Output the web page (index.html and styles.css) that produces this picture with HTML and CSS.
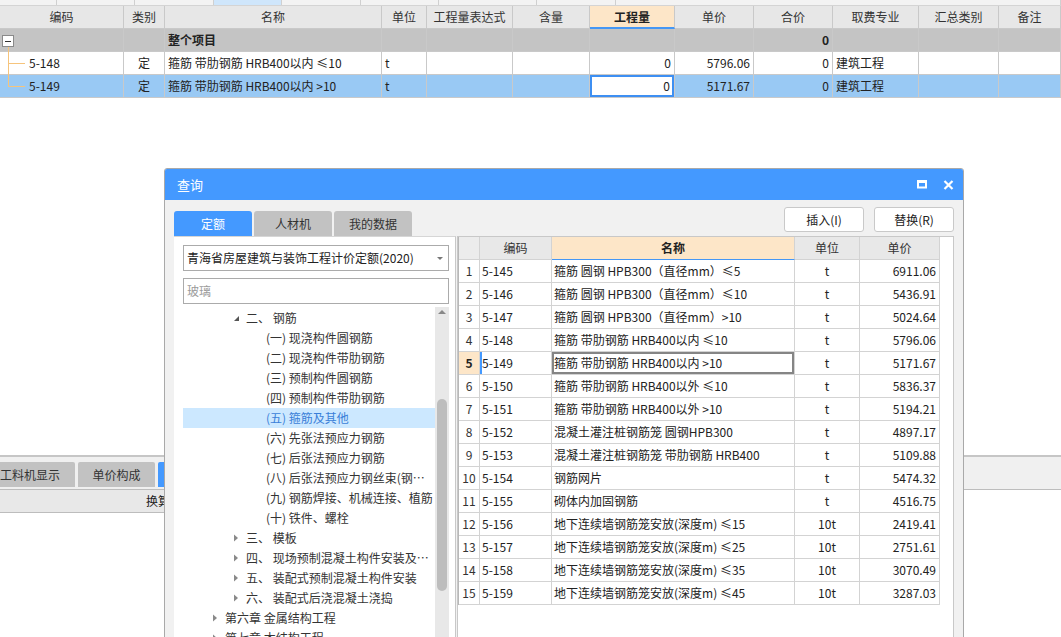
FILE: index.html
```html
<!DOCTYPE html>
<html lang="zh-CN">
<head>
<meta charset="utf-8">
<title>查询</title>
<link rel="stylesheet" href="styles.css">
</head>
<body>
<div class="app">
  <div class="main">
    <div class="strip">
      <span></span><span></span><span></span><span class="strip-hi"></span><span></span><span></span><span></span><span></span><span></span>
    </div>
    <div class="trow thead">
      <div>编码</div><div>类别</div><div>名称</div><div>单位</div><div>工程量表达式</div><div>含量</div><div class="hl">工程量</div><div>单价</div><div>合价</div><div>取费专业</div><div>汇总类别</div><div>备注</div>
    </div>
    <div class="trow total">
      <div></div><div></div><div class="b">整个项目</div><div></div><div></div><div></div><div></div><div></div><div class="num b">0</div><div></div><div></div><div></div>
    </div>
    <div class="trow">
      <div class="code">5-148</div><div class="c">定</div><div>箍筋 带肋钢筋 HRB400以内 ≤10</div><div>t</div><div></div><div></div><div class="num">0</div><div class="num">5796.06</div><div class="num">0</div><div>建筑工程</div><div></div><div></div>
    </div>
    <div class="trow sel">
      <div class="code">5-149</div><div class="c">定</div><div>箍筋 带肋钢筋 HRB400以内 &gt;10</div><div>t</div><div></div><div></div><div class="num edit">0</div><div class="num">5171.67</div><div class="num">0</div><div>建筑工程</div><div></div><div></div>
    </div>
    <svg class="treelines" width="30" height="100" viewBox="0 0 30 100">
      <path d="M8.5 47 V86.5 M8.5 63.5 H25 M8.5 86.5 H25" stroke="#f6c47c" stroke-width="1" fill="none"/>
      <rect x="2.5" y="35.5" width="11" height="11" fill="#fff" stroke="#8a8a8a"/>
      <path d="M5 41.5 H11" stroke="#333" stroke-width="1"/>
    </svg>
  </div>

  <div class="bottom">
    <div class="btabs">
      <span class="btab first">工料机显示</span>
      <span class="btab">单价构成</span>
      <span class="btab blue">标准换算</span>
    </div>
    <div class="bsub"><span>换算</span></div>
  </div>
</div>

<div class="dlg">
  <div class="dlg-title">
    <span>查询</span>
    <span class="dlg-icons">
      <svg width="10" height="9" viewBox="0 0 10 9"><rect x="1" y="1.5" width="8" height="6" fill="none" stroke="#fff" stroke-width="2"/><rect x="0" y="0" width="10" height="3" fill="#fff"/></svg>
      <svg width="11" height="10" viewBox="0 0 11 10"><path d="M1.5 1 L9.5 9 M9.5 1 L1.5 9" stroke="#fff" stroke-width="2.2"/></svg>
    </span>
  </div>
  <div class="dlg-toolbar">
    <div class="tabs">
      <span class="tab active">定额</span>
      <span class="tab">人材机</span>
      <span class="tab">我的数据</span>
    </div>
    <div class="btns">
      <span class="btn">插入(I)</span>
      <span class="btn">替换(R)</span>
    </div>
  </div>
  <div class="panes">
    <div class="left">
      <div class="select"><span>青海省房屋建筑与装饰工程计价定额(2020)</span><i class="caret"></i></div>
      <div class="search">玻璃</div>
      <div class="tree-wrap">
        <div class="tree">
          <div class="node l2"><svg class="ar" width="13" height="20" viewBox="0 0 13 20"><polygon points="1,13 6,13 6,8" fill="#555"/></svg>二、 钢筋</div>
          <div class="node l3"><i class="sp"></i>(一) 现浇构件圆钢筋</div>
          <div class="node l3"><i class="sp"></i>(二) 现浇构件带肋钢筋</div>
          <div class="node l3"><i class="sp"></i>(三) 预制构件圆钢筋</div>
          <div class="node l3"><i class="sp"></i>(四) 预制构件带肋钢筋</div>
          <div class="node l3 on"><i class="sp"></i>(五) 箍筋及其他</div>
          <div class="node l3"><i class="sp"></i>(六) 先张法预应力钢筋</div>
          <div class="node l3"><i class="sp"></i>(七) 后张法预应力钢筋</div>
          <div class="node l3"><i class="sp"></i>(八) 后张法预应力钢丝束(钢绞线)</div>
          <div class="node l3"><i class="sp"></i>(九) 钢筋焊接、机械连接、植筋</div>
          <div class="node l3"><i class="sp"></i>(十) 铁件、螺栓</div>
          <div class="node l2"><svg class="ar" width="13" height="20" viewBox="0 0 13 20"><polygon points="1,6.5 5,10 1,13.5" fill="#8a8a8a"/></svg>三、 模板</div>
          <div class="node l2"><svg class="ar" width="13" height="20" viewBox="0 0 13 20"><polygon points="1,6.5 5,10 1,13.5" fill="#8a8a8a"/></svg>四、 现场预制混凝土构件安装及运输</div>
          <div class="node l2"><svg class="ar" width="13" height="20" viewBox="0 0 13 20"><polygon points="1,6.5 5,10 1,13.5" fill="#8a8a8a"/></svg>五、 装配式预制混凝土构件安装</div>
          <div class="node l2"><svg class="ar" width="13" height="20" viewBox="0 0 13 20"><polygon points="1,6.5 5,10 1,13.5" fill="#8a8a8a"/></svg>六、 装配式后浇混凝土浇捣</div>
          <div class="node l1"><svg class="ar" width="13" height="20" viewBox="0 0 13 20"><polygon points="1,6.5 5,10 1,13.5" fill="#8a8a8a"/></svg>第六章 金属结构工程</div>
          <div class="node l1"><svg class="ar" width="13" height="20" viewBox="0 0 13 20"><polygon points="1,6.5 5,10 1,13.5" fill="#8a8a8a"/></svg>第七章 木结构工程</div>
        </div>
        <div class="vscroll"><i class="up"></i><i class="thumb"></i></div>
      </div>
    </div>
    <div class="right">
      <div class="rt">
        <div class="rrow rhead"><div></div><div>编码</div><div class="hl">名称</div><div>单位</div><div>单价</div></div>
        <div class="rrow"><div>1</div><div>5-145</div><div>箍筋 圆钢 HPB300（直径mm）≤5</div><div class="c">t</div><div class="num">6911.06</div></div>
        <div class="rrow"><div>2</div><div>5-146</div><div>箍筋 圆钢 HPB300（直径mm）≤10</div><div class="c">t</div><div class="num">5436.91</div></div>
        <div class="rrow"><div>3</div><div>5-147</div><div>箍筋 圆钢 HPB300（直径mm）&gt;10</div><div class="c">t</div><div class="num">5024.64</div></div>
        <div class="rrow"><div>4</div><div>5-148</div><div>箍筋 带肋钢筋 HRB400以内 ≤10</div><div class="c">t</div><div class="num">5796.06</div></div>
        <div class="rrow cur"><div>5</div><div>5-149</div><div>箍筋 带肋钢筋 HRB400以内 &gt;10</div><div class="c">t</div><div class="num">5171.67</div></div>
        <div class="rrow"><div>6</div><div>5-150</div><div>箍筋 带肋钢筋 HRB400以外 ≤10</div><div class="c">t</div><div class="num">5836.37</div></div>
        <div class="rrow"><div>7</div><div>5-151</div><div>箍筋 带肋钢筋 HRB400以外 &gt;10</div><div class="c">t</div><div class="num">5194.21</div></div>
        <div class="rrow"><div>8</div><div>5-152</div><div>混凝土灌注桩钢筋笼 圆钢HPB300</div><div class="c">t</div><div class="num">4897.17</div></div>
        <div class="rrow"><div>9</div><div>5-153</div><div>混凝土灌注桩钢筋笼 带肋钢筋 HRB400</div><div class="c">t</div><div class="num">5109.88</div></div>
        <div class="rrow"><div>10</div><div>5-154</div><div>钢筋网片</div><div class="c">t</div><div class="num">5474.32</div></div>
        <div class="rrow"><div>11</div><div>5-155</div><div>砌体内加固钢筋</div><div class="c">t</div><div class="num">4516.75</div></div>
        <div class="rrow"><div>12</div><div>5-156</div><div>地下连续墙钢筋笼安放(深度m) ≤15</div><div class="c">10t</div><div class="num">2419.41</div></div>
        <div class="rrow"><div>13</div><div>5-157</div><div>地下连续墙钢筋笼安放(深度m) ≤25</div><div class="c">10t</div><div class="num">2751.61</div></div>
        <div class="rrow"><div>14</div><div>5-158</div><div>地下连续墙钢筋笼安放(深度m) ≤35</div><div class="c">10t</div><div class="num">3070.49</div></div>
        <div class="rrow"><div>15</div><div>5-159</div><div>地下连续墙钢筋笼安放(深度m) ≤45</div><div class="c">10t</div><div class="num">3287.03</div></div>
      </div>
    </div>
  </div>
</div>
</body>
</html>
```

FILE: styles.css
```css
* { box-sizing: border-box; margin: 0; padding: 0; }
html, body { width: 1061px; height: 637px; overflow: hidden; }
body {
  font-family: "Noto Sans CJK SC", "Microsoft YaHei", sans-serif;
  font-size: 12px;
  color: #222;
  background: #fff;
  position: relative;
}
.app { display: flex; flex-direction: column; height: 637px; }

/* ---------- top grid ---------- */
.main { height: 455px; position: relative; }
.strip {
  display: grid;
  grid-template-columns: 57px 78px 79px 68px 79px 78px 98px 79px 1fr;
  height: 6px;
  background: #f3f3f3;
  border-bottom: 1px solid #d4d4d4;
}
.strip span { border-right: 1px solid #d0d0d0; }
.strip .strip-hi { background: #cfe6fb; }

.trow {
  display: grid;
  grid-template-columns: 124px 41px 217px 45px 86px 77px 85px 79px 79px 86px 80px 1fr;
  height: 23px;
}
.trow > div {
  border-right: 1px solid #c9c9c9;
  border-bottom: 1px solid #c9c9c9;
  line-height: 22px;
  padding: 0 3px;
  white-space: nowrap;
  overflow: hidden;
}
.thead { height: 23px; }
.thead > div { background: #e7e7e7; text-align: center; color: #333; }
.thead > div.hl {
  background: #fde6c8;
  font-weight: bold;
  color: #222;
  border-bottom: 2px solid #4597f5;
  line-height: 21px;
}
.total > div { background: #c4c4c4; }
.sel > div { background: #99c9f4; }
.trow .b { font-weight: bold; }
.trow .num { text-align: right; }
.trow .c { text-align: center; }
.trow .code { padding-left: 29px; }
.sel > div.edit {
  background: #fff;
  box-shadow: inset 0 0 0 2px #3d8ff2;
  padding-right: 4px;
}
.treelines { position: absolute; left: 0; top: 0; }

/* ---------- bottom panel ---------- */
.bottom { flex: 1; border-top: 2px solid #c6c6c6; }
.btabs {
  height: 33px;
  background: #f0f0f0;
  border-bottom: 1px solid #bdbdbd;
  display: flex;
  align-items: flex-end;
  gap: 3px;
  padding-bottom: 2px;
  overflow: hidden;
}
.btab {
  width: 77px;
  height: 25px;
  flex: none;
  background: #c2c2c2;
  color: #333;
  text-align: center;
  line-height: 25px;
  border-radius: 2px 2px 0 0;
}
.btab.first { width: 88px; margin-left: -13px; text-align: left; padding-left: 13px; }
.btab.blue { background: #4499ff; color: #fff; }
.bsub {
  width: 190px;
  height: 23px;
  background: #e8e8e8;
  border-bottom: 1px solid #bdbdbd;
  padding-left: 146px;
  line-height: 22px;
  color: #222;
  white-space: nowrap;
}

/* ---------- dialog ---------- */
.dlg {
  position: absolute;
  left: 164px;
  top: 168px;
  width: 800px;
  height: 490px;
  border: 1px solid #a9a9a9;
  border-radius: 3px 3px 0 0;
  background: #f1f1f1;
  display: flex;
  flex-direction: column;
}
.dlg-title {
  height: 31px;
  flex: none;
  background: #4499ff;
  color: #fff;
  font-size: 13px;
  display: flex;
  align-items: center;
  justify-content: space-between;
  padding: 0 9px 0 12px;
  border-radius: 2px 2px 0 0;
}
.dlg-icons { display: flex; gap: 16px; align-items: center; }
.dlg-icons svg { display: block; }

.dlg-toolbar {
  height: 36px;
  flex: none;
  display: flex;
  justify-content: space-between;
  padding: 0 9px 0 9px;
}
.tabs { display: flex; gap: 2px; align-self: flex-end; }
.tab {
  width: 78px;
  height: 25px;
  line-height: 25px;
  text-align: center;
  background: #c2c2c2;
  color: #333;
  border-radius: 3px 3px 0 0;
}
.tab.active { background: #4499ff; color: #fff; }
.btns { display: flex; gap: 10px; margin-top: 7px; }
.btn {
  width: 80px;
  height: 25px;
  line-height: 23px;
  text-align: center;
  background: #fff;
  border: 1px solid #c9c9c9;
  border-radius: 3px;
  color: #222;
}

.panes {
  flex: 1;
  display: flex;
  gap: 1px;
  padding: 0 9px 0 9px;
  min-height: 0;
}
.left {
  width: 282px;
  flex: none;
  background: #fff;
  border-top: 1px solid #d6d6d6;
  border-right: 1px solid #c8c8c8;
  padding: 8px 6px 0 9px;
  display: flex;
  flex-direction: column;
}
.select, .search {
  width: 266px;
  height: 26px;
  border: 1px solid #ababab;
  background: #fff;
  line-height: 24px;
  padding-left: 3px;
  white-space: nowrap;
  flex: none;
}
.select { display: flex; justify-content: space-between; align-items: center; padding-right: 5px; color: #222; }
.caret {
  width: 0; height: 0;
  border-left: 3px solid transparent;
  border-right: 3px solid transparent;
  border-top: 3px solid #777;
}
.search { margin-top: 7px; color: #9a9a9a; }

.tree-wrap { flex: 1; display: flex; margin-top: 3px; min-height: 0; }
.tree { width: 253px; padding-top: 1px; overflow: hidden; }
.node {
  height: 20px;
  line-height: 20px;
  white-space: nowrap;
  overflow: hidden;
  text-overflow: ellipsis;
  color: #333;
}
.node.l1 { padding-left: 29px; }
.node.l2 { padding-left: 50px; }
.node.l3 { padding-left: 70px; }
.node.on { background: #cce8ff; color: #3a7fd8; }
.node .ar { display: inline-block; vertical-align: top; }
.node .sp { display: inline-block; width: 13px; height: 20px; vertical-align: top; }
.vscroll {
  width: 14px;
  background: #e8e8e8;
  position: relative;
  flex: none;
}
.vscroll .up {
  position: absolute;
  left: 3px; top: 3px;
  width: 0; height: 0;
  border-left: 4px solid transparent;
  border-right: 4px solid transparent;
  border-bottom: 4px solid #888;
}
.vscroll .thumb {
  position: absolute;
  left: 2px; top: 92px;
  width: 10px; height: 192px;
  background: #bdbdbd;
  border-radius: 5px;
}

.right {
  flex: 1;
  background: #fff;
  border: 1px solid #c8c8c8;
  border-bottom: none;
}
.rt { width: 481px; border-left: 1px solid #b8b8b8; }
.rrow {
  display: grid;
  grid-template-columns: 21px 72px 243px 65px 80px;
  height: 23px;
}
.rrow > div {
  border-right: 1px solid #d3d3d3;
  border-bottom: 1px solid #d3d3d3;
  line-height: 22px;
  padding: 0 2px;
  white-space: nowrap;
  overflow: hidden;
}
.rrow > div:first-child { text-align: center; padding: 0; color: #333; }
.rrow .c { text-align: center; }
.rrow .num { text-align: right; padding-right: 3px; }
.rhead > div { background: #e8e8e8; text-align: center; color: #333; }
.rhead > div:first-child { background: #ececec; }
.rhead > div.hl { background: #fde6c8; font-weight: bold; color: #222; border-bottom: 1px solid #4597f5; }
.cur > div:first-child { background: #fde6c8; font-weight: bold; color: #222; }
.cur > div:nth-child(2) { box-shadow: inset 2px 0 0 #4499ff; }
.cur > div:nth-child(3) { box-shadow: inset 0 0 0 2px #858585; }
```
